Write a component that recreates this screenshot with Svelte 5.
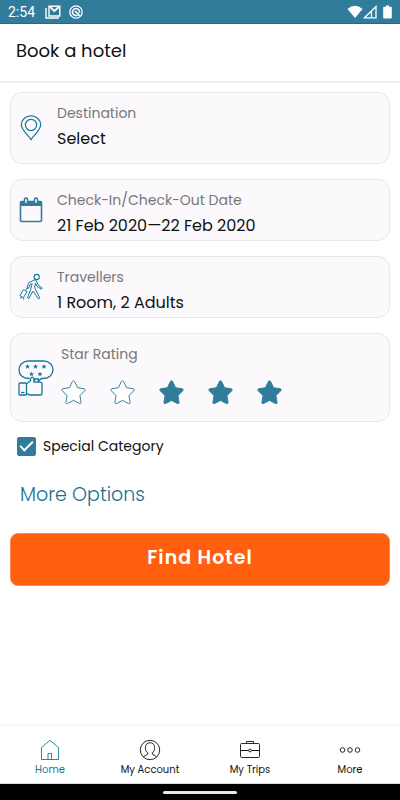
<script lang="ts">
  interface Field {
    id: string;
    label: string;
    value: string;
  }

  const fields: Field[] = [
    { id: "destination", label: "Destination", value: "Select" },
    { id: "dates", label: "Check-In/Check-Out Date", value: "21 Feb 2020—22 Feb 2020" },
    { id: "travellers", label: "Travellers", value: "1 Room, 2 Adults" },
  ];

  const tabs = [
    { id: "home", label: "Home" },
    { id: "account", label: "My Account" },
    { id: "trips", label: "My Trips" },
    { id: "more", label: "More" },
  ];

  let stars = $state([false, false, true, true, true]);
  let special = $state(true);
  let activeTab = $state("home");
</script>

<div class="screen">
  <div class="status">
    <span class="time">2:54</span>
    <svg class="mail" width="16" height="14" viewBox="0 0 16 14" fill="none" stroke="#fff">
      <path d="M1 3v10h13" stroke-width="1.4" />
      <path d="M4 11V1.2h10.8V11z" stroke-width="1.4" />
      <path d="M5 2l4.400 4L13.800 2" stroke-width="1.700" />
    </svg>
    <svg width="14" height="14" viewBox="0 0 14 14" fill="none" stroke="#fff">
      <circle cx="7" cy="7" r="6.200" stroke-width="1.300" />
      <path d="M8.500 10.200A3.500 3.500 0 1 1 10.400 7.800" stroke-width="1.600" />
      <path d="M6 6l4.800 4.800" stroke-width="1.700" />
    </svg>
    <span class="spacer"></span>
    <svg width="16" height="14" viewBox="0 0 16 14" fill="#fff">
      <path d="M0.500 4Q8-2.500 15.500 4L8 13z" />
    </svg>
    <svg width="14" height="14" viewBox="0 0 14 14" fill="none" stroke="#fff">
      <path d="M1.500 12.800L13 1.500v11.300z" stroke-width="1.300" />
      <path d="M8.500 6v6" stroke-width="1.300" />
    </svg>
    <svg class="battery" width="9" height="14" viewBox="0 0 9 14" fill="#fff">
      <path d="M3 0.500h3v1.300h2q0.800 0 0.800 0.800v10q0 0.900-0.900 0.900H1.100q-0.900 0-0.900-0.900v-10q0-0.800 0.800-0.800h2z" />
    </svg>
  </div>

  <header>
    <h1>Book a hotel</h1>
  </header>

  <main>
    {#each fields as field (field.id)}
      <button type="button" class="card field {field.id}">
        <svg width="24" height="28" viewBox="0 0 24 28" fill="none" stroke="#16779a" stroke-width="1.2">
          {#if field.id === "destination"}
            <path d="M12 25.600C9 21 2.300 16 2.300 10.800a9.700 8.900 0 0 1 19.400 0C21.700 16 15 21 12 25.600z" />
            <circle cx="12" cy="11" r="5.600" />
          {:else if field.id === "dates"}
            <path d="M2 5.500h20v4.500H2z" fill="#317c9a" stroke="none" />
            <path d="M5.500 5.500v-2a1.500 1.500 0 0 1 3 0v2M15.500 5.500v-2a1.500 1.500 0 0 1 3 0v2" stroke="#317c9a" stroke-width="1.600" />
            <rect x="1.500" y="5.500" width="21" height="20" rx="1" stroke="#317c9a" stroke-width="1.600" />
            <path d="M7 4v3M17 4v3" stroke="#fff" stroke-width="1.300" />
          {:else}
            <circle cx="17.700" cy="4" r="2.600" stroke-width="1.100" />
            <path d="M14 7.700L9.600 9.800 8 15l1.500.5 1.600-4 2-.8-1.500 6-2.900 7.400q-.2 1.500 1.200 1.500l4-7.500 2 2.700 3.300 4.800q1.500.3 1.600-.8l-4.200-8-.9-2.800.8-3.600 1.400 2.800 4.400 3 .8-1.300-4-2.900-1.800-4.300q-1.300-1.600-3.300-.2z" stroke-width="1" />
            <path d="M4.500 16.500l3.500 2-3.600 6.300L.900 22.700zM7 17l1.400-2.200M2 24v1.700M5 25l-.5 1.500" stroke-width="1" />
          {/if}
        </svg>
        <span class="copy">
          <span class="label">{field.label}</span>
          <span class="value">{field.value}</span>
        </span>
      </button>
    {/each}

    <section class="card rating" aria-labelledby="rating-label">
      <svg width="36" height="36" viewBox="0 0 36 36" fill="none" stroke="#16779a" stroke-width="1.300">
        <path d="M11.500 18.500H10.500C5 18.500 1 15 1 9.800S5 1 10.500 1h15C31 1 35 4.800 35 9.800s-4 8.700-9.500 8.700h-2l-4 3.500" />
        <path d="M9 23.500l3.500-2.800v-1.500q.2-2 1.800-2t1.700 2v3h6q2 .1 2 2V33q0 2-2 2H12l-3-1.300M16.500 22v-3h4v3" />
        <rect x="1" y="23" width="7.500" height="12" rx="1" />
        <path d="M3 32.500h3.500" />
        {#each [[9.5, 6.5], [17.5, 6.5], [26, 6.5], [13.5, 14], [22, 14]] as [x, y]}
          <path
            transform="translate({x} {y})"
            d="M0-2.500L.7-.8 2.500-.7 1.100.5 1.600 2.300 0 1.300-1.600 2.300-1.100.5-2.500-.7-.7-.8z"
            fill="#16779a"
            stroke="none"
          />
        {/each}
      </svg>
      <div class="copy">
        <span class="label" id="rating-label">Star Rating</span>
        <div class="stars">
          {#each stars as on, i}
            <button
              type="button"
              class="star"
              class:on
              aria-label="{i + 1} star"
              aria-pressed={on}
              onclick={() => (stars[i] = !on)}
            >
              <svg width="25" height="25" viewBox="0 0 26 26">
                <path d="M11.900 1.500q1.100-1.600 2.200 0l3.100 6.500 6.900 1.100q1.800.6.600 2l-5 5.200 1.200 7.100q0 1.700-1.700 1.100L13 21.200l-6.200 3.300q-1.700.6-1.700-1.100l1.200-7.100-5-5.200q-1.200-1.400.6-2L8.800 8z" />
              </svg>
            </button>
          {/each}
        </div>
      </div>
    </section>

    <label class="special">
      <input type="checkbox" bind:checked={special} />
      Special Category
    </label>

    <a class="options" href="#options">More Options</a>

    <button type="button" class="find">Find Hotel</button>
  </main>

  <nav>
    {#each tabs as tab (tab.id)}
      <a
        href="#{tab.id}"
        class:active={tab.id === activeTab}
        aria-current={tab.id === activeTab ? "page" : undefined}
        onclick={() => (activeTab = tab.id)}
      >
        <svg width="22" height="22" viewBox="0 0 22 22" fill="none" stroke="currentColor" stroke-width="0.900">
          {#if tab.id === "home"}
            <path d="M2.500 8.500v12h17v-12L11 1.300zM9 20.500v-6h3.500v6" />
          {:else if tab.id === "account"}
            <circle cx="11" cy="11" r="9.700" />
            <path d="M4.500 18.200q.5-1.700 3.500-2.500 1.200-.4.700-1.700C7 12.500 6 10.500 6.500 7.500 7 5 8.500 3.800 11 3.800s4 1.200 4.500 3.700c.5 3-.5 5-2.200 6.500q-.5 1.300.7 1.700 3 .8 3.500 2.500" />
          {:else if tab.id === "trips"}
            <rect x="1.500" y="4.500" width="19" height="14" rx="1" />
            <path d="M7.500 4.500v-2h7v2" />
            <path d="M2 11.500h7.500M12.500 11.500h7.500" stroke-width="1.200" />
            <circle cx="11" cy="11.500" r="1.400" />
          {:else}
            <circle cx="3.500" cy="11" r="2.300" />
            <circle cx="11" cy="11" r="2.300" />
            <circle cx="18.500" cy="11" r="2.300" />
          {/if}
        </svg>
        {tab.label}
      </a>
    {/each}
  </nav>
  <div class="gesture"><span></span></div>
</div>

<style>
  :global(body) {
    margin: 0;
    background: #fff;
  }

  .screen {
    display: flex;
    flex-direction: column;
    min-height: 100vh;
    font-family: "Poppins", "Inter", sans-serif;
    font-weight: 400;
    color: #111;
  }

  button {
    font: inherit;
    color: inherit;
    cursor: pointer;
  }

  svg {
    display: block;
    flex-shrink: 0;
  }

  .status {
    display: flex;
    align-items: center;
    box-sizing: border-box;
    height: 24px;
    padding: 0 8px;
    background: #317c9a;
    border-bottom: 1px solid #16708d;
  }

  .time {
    font-family: Roboto, sans-serif;
    font-size: 14px;
    color: #fff;
  }

  .mail {
    margin: 0 8px 0 10px;
  }

  .spacer {
    flex: 1;
  }

  .battery {
    margin-left: 6px;
  }

  header {
    padding: 12px 16px 15px;
    border-bottom: 2px solid #efefef;
  }

  h1 {
    margin: 0;
    font-size: 18px;
    line-height: 30px;
    font-weight: 400;
  }

  main {
    display: flex;
    flex-direction: column;
    padding: 9px 10px 20px;
  }

  .card {
    display: flex;
    align-items: center;
    box-sizing: border-box;
    margin: 0 0 15px;
    border: 1px solid #e9e8e9;
    border-radius: 12px;
    background: #fbf9fb;
    text-align: left;
  }

  .field {
    gap: 14px;
    min-height: 62px;
    padding: 0 8px;
  }

  .destination {
    min-height: 72px;
  }

  .copy {
    display: flex;
    flex-direction: column;
    align-self: flex-start;
    padding-top: 8px;
  }

  .label {
    font-size: 14px;
    line-height: 25px;
    color: #777;
  }

  .value {
    font-size: 16px;
    line-height: 25px;
  }

  .rating {
    gap: 7px;
    min-height: 89px;
    margin-bottom: 12px;
    padding: 0 7px;
  }

  .stars {
    display: flex;
    gap: 24px;
    padding-top: 13px;
  }

  .star {
    padding: 0;
    border: none;
    background: none;
    fill: #fff;
    stroke: #317c9a;
  }

  .star.on {
    fill: #317c9a;
  }

  .special {
    display: flex;
    align-items: center;
    align-self: flex-start;
    gap: 7px;
    margin-left: 7px;
    font-size: 14px;
    line-height: 24px;
  }

  .special input {
    appearance: none;
    display: grid;
    place-items: center;
    width: 19px;
    height: 19px;
    margin: 0;
    border: 1px solid #317c9a;
    border-radius: 2px;
  }

  .special input:checked {
    background: #317c9a;
  }

  .special input:checked::before {
    content: "";
    width: 11px;
    height: 5px;
    margin-bottom: 4px;
    border: solid #fff;
    border-width: 0 0 2px 2px;
    transform: rotate(-45deg);
  }

  .options {
    align-self: flex-start;
    margin: 22px 10px 23px;
    font-size: 19px;
    font-weight: 300;
    line-height: 30px;
    color: #16708d;
    text-decoration: none;
  }

  .find {
    height: 53px;
    padding: 0 0 4px;
    border: 1px solid #ff8a4f;
    border-radius: 8px;
    background: #ff5f0f;
    font-size: 19px;
    font-weight: 600;
    letter-spacing: 1px;
    color: #fff;
  }

  nav {
    display: grid;
    grid-template-columns: repeat(4, 1fr);
    margin-top: auto;
    border-top: 2px solid #f8f8f8;
    border-bottom: 1px solid #ddd;
  }

  nav a {
    display: flex;
    flex-direction: column;
    align-items: center;
    padding: 13px 0 4px;
    font-size: 10px;
    line-height: 18px;
    color: #111;
    text-decoration: none;
  }

  nav a.active {
    color: #16779a;
  }

  .gesture {
    display: flex;
    justify-content: center;
    align-items: center;
    height: 16px;
    background: #000;
  }

  .gesture span {
    width: 74px;
    height: 3px;
    border-radius: 2px;
    background: #efe6ea;
  }
</style>
